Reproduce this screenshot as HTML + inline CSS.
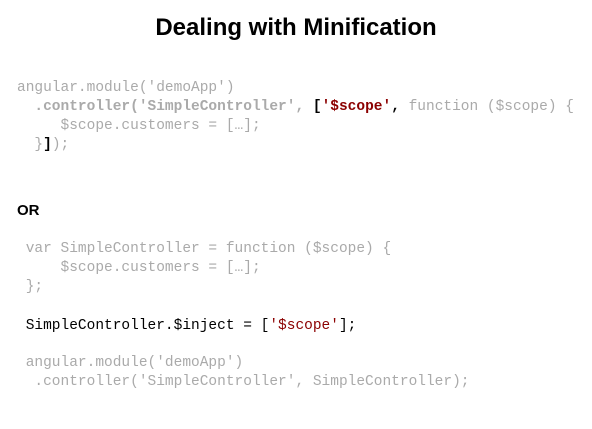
<!DOCTYPE html>
<html><head><style>
body{margin:0;width:592px;height:429px;background:#fff;position:relative;overflow:hidden}
h1{position:absolute;top:14px;left:0;width:592px;text-align:center;margin:0;font:bold 24px "Liberation Sans",sans-serif;color:#000;letter-spacing:0px}
pre{position:absolute;left:17px;margin:0;font:14.5px/19px "Liberation Mono",monospace;color:#aaa;white-space:pre}
b{font-weight:bold}
.k{color:#000}.r{color:#8b0000}
.or{position:absolute;left:17px;top:202px;font:bold 15px "Liberation Sans",sans-serif}
</style></head><body>
<h1>Dealing with Minification</h1>
<pre style="top:79px">angular.module('demoApp')
  <b>.controller('SimpleController', <span class="k">[</span><span class="r">'$scope'</span><span class="k">,</span></b> function ($scope) {
     $scope.customers = […];
  }<b class="k">]</b>);</pre>
<div class="or">OR</div>
<pre style="top:240px"> var SimpleController = function ($scope) {
     $scope.customers = […];
 };</pre>
<pre style="top:317px;color:#000"> SimpleController.$inject = [<span class="r">'$scope'</span>];</pre>
<pre style="top:354px"> angular.module('demoApp')
  .controller('SimpleController', SimpleController);</pre>
</body></html>
